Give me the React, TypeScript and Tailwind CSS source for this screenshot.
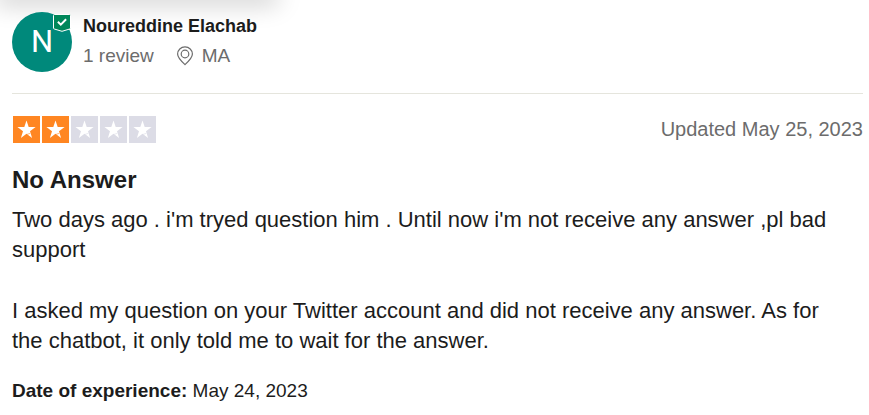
const STAR = 'M13.500 4.500l2.200 6.600h6.900l-5.600 4.100 2.100 6.700-5.600-4.100-5.600 4.100 2.100-6.700-5.600-4.100h6.900z';

function Star({ filled }: { filled: boolean }) {
  return (
    <svg viewBox="0 0 27 27" className="size-[27px]" aria-hidden="true">
      <rect width="27" height="27" fill={filled ? '#ff8622' : '#dcdce6'} />
      <path d={STAR} fill="#fff" />
      <path d="M14.200 18.300l3-.9" stroke={filled ? '#ff8622' : '#dcdce6'} strokeWidth="0.6" />
    </svg>
  );
}

function Avatar() {
  return (
    <div className="relative flex size-[60px] shrink-0 items-center justify-center rounded-full bg-[#00897b] font-[Roboto,sans-serif] text-[31px] text-white">
      N
      <svg viewBox="0 0 18 18" className="absolute top-0.5 right-px size-[18px]" aria-label="Verified">
        <path
          d="M1.500.5h15a1 1 0 0 1 1 1v12.500a1 1 0 0 1-.8 1L9 17.300l-7.700-2.300a1 1 0 0 1-.8-1V1.500a1 1 0 0 1 1-1z"
          fill="#00875a"
          stroke="#fff"
          strokeWidth="1"
        />
        <path d="M4.900 7.800l2.900 2.800 5.300-5.300" fill="none" stroke="#fff" strokeWidth="2" />
      </svg>
    </div>
  );
}

function Pin() {
  return (
    <svg viewBox="0 0 18 20" className="h-5 w-[18px]" fill="none" stroke="#6c6c6c" strokeWidth="1.2" aria-hidden="true">
      <path d="M9 18.600C4.600 14.600 1.600 11.600 1.600 8a7.400 7.100 0 0 1 14.800 0c0 3.600-3 6.600-7.400 10.600z" />
      <circle cx="9" cy="8" r="3.800" />
    </svg>
  );
}

export default function App() {
  return (
    <div className="bg-white font-['Liberation_Sans',Arial,sans-serif] text-[#1c1c1c]">
      <div className="relative">
        <div className="absolute -top-2 left-0 h-2 w-[274px] shadow-[0_0_24px_4px_rgba(0,0,0,0.22)]" />
      </div>
      <article className="relative pt-3 pr-1.5 pl-3">
        <header className="flex gap-[11px] border-b border-[#e5e5dd] pb-[21px]">
          <Avatar />
          <div>
            <a href="#profile" className="block text-lg leading-[28px] font-bold">
              Noureddine Elachab
            </a>
            <div className="flex items-center gap-[22px] text-[19px] leading-[32px] text-[#6c6c6c]">
              <span>1 review</span>
              <span className="flex items-center gap-2">
                <Pin />
                MA
              </span>
            </div>
          </div>
        </header>
        <div className="flex items-center justify-between pt-[21px]">
          <div className="flex gap-0.5 pl-px" role="img" aria-label="Rated 2 out of 5 stars">
            {[1, 2, 3, 4, 5].map((n) => (
              <Star key={n} filled={n <= 2} />
            ))}
          </div>
          <time dateTime="2023-05-25" className="text-xl leading-[28px] text-[#6c6c6c]">
            Updated May 25, 2023
          </time>
        </div>
        <h2 className="pt-[22px] text-2xl leading-[30px] font-bold">No Answer</h2>
        <div className="space-y-[31px] pt-2.5 pr-4 text-[22px] leading-[30px]">
          <p>
            Two days ago . i'm tryed question him . Until now i'm not receive any answer ,pl bad support
          </p>
          <p>
            I asked my question on your Twitter account and did not receive any answer. As for the chatbot, it only told
            me to wait for the answer.
          </p>
        </div>
        <p className="pt-5 text-[19px] leading-[30px]">
          <b>Date of experience:</b> May 24, 2023
        </p>
      </article>
    </div>
  );
}
